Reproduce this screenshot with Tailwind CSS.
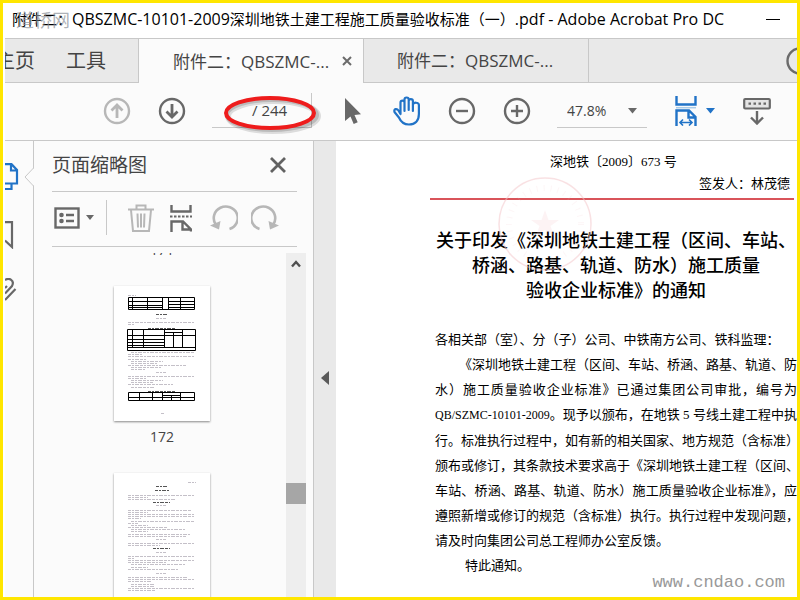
<!DOCTYPE html>
<html lang="zh-CN">
<head>
  <meta charset="UTF-8">
  <meta name="viewport" content="width=device-width, initial-scale=1.0">
  <title>Adobe Acrobat Pro DC</title>
  <script src="https://cdn.jsdelivr.net/npm/@tailwindcss/browser@4"></script>
</head>
<body class="font-['Open_Sans','Noto_Sans_CJK_SC',sans-serif] text-[#444]">
  <div class="h-screen border-[3px] border-[#ffe600] bg-white pl-[2px] flex flex-col overflow-hidden">

    <!-- Title bar -->
    <header class="relative h-[36px] shrink-0 border-b border-[#c8c8c8] flex items-center justify-between pl-[7px] pr-[17px] pb-[3px] text-black">
      <h1 class="text-[16px] leading-[20px] whitespace-nowrap"><span class="text-[15px]">附件二<span class="font-['Noto_Sans_CJK_TC',sans-serif]">：</span></span>QBSZMC-10101-2009<span class="text-[15px]">深圳地铁土建工程施工质量验收标准（一）</span>.pdf - Adobe Acrobat Pro DC</h1>
      <button aria-label="最小化" class="w-[14px] h-4 flex items-center"><span class="block w-full h-px bg-black"></span></button>
      <span class="absolute left-[11px] top-[4px] text-[18px] leading-[26px] text-[#8a8f98]/70">道桥网</span>
    </header>

    <!-- Tabs -->
    <nav class="h-[44px] shrink-0 flex bg-[#e9e9e9] text-[17px] overflow-hidden">
      <div class="w-[134px] shrink-0 flex items-center border-b border-r border-[#c8c8c8] text-[20px] overflow-hidden">
        <a href="#" class="shrink-0 -ml-[10px]">主页</a>
        <a href="#" class="shrink-0 ml-[31px]">工具</a>
      </div>
      <div class="w-[224px] shrink-0 flex items-center bg-[#fbfbfb] pl-[34px] pr-[11px] justify-between">
        <a href="#" class="whitespace-nowrap">附件二<span class="font-['Noto_Sans_CJK_TC',sans-serif]">：</span>QBSZMC-...</a>
        <button aria-label="关闭标签">
          <svg class="w-[10px] h-[10px] block" viewBox="0 0 10 10" stroke="#6b6b6b" stroke-width="2"><path d="M1 1l8 8M9 1l-8 8"/></svg>
        </button>
      </div>
      <div class="w-[226px] shrink-0 flex items-center border-x border-b border-[#c8c8c8] pl-[33px]">
        <a href="#" class="whitespace-nowrap">附件二<span class="font-['Noto_Sans_CJK_TC',sans-serif]">：</span>QBSZMC-...</a>
      </div>
      <div class="flex-1 flex items-center justify-end border-b border-[#c8c8c8] overflow-hidden">
        <button aria-label="帮助" class="shrink-0 -mr-[17px]">
          <svg class="w-[28px] h-[28px] block" viewBox="0 0 28 28" fill="none" stroke="#6b6b6b" stroke-width="2.4"><circle cx="14" cy="14" r="12.5"/></svg>
        </button>
      </div>
    </nav>

    <!-- Toolbar -->
    <div class="h-[58px] shrink-0 flex items-center bg-[#fbfbfb] border-b border-[#c8c8c8] pl-[98px] pb-[2px] overflow-hidden">
      <button aria-label="上一页" class="shrink-0">
        <svg class="w-[28px] h-[28px] block" viewBox="0 0 28 28" fill="none" stroke="#b7b7b7" stroke-width="2.4"><circle cx="14" cy="14" r="12"/><path stroke-width="2.8" d="M14 21V8M8.500 13.500L14 8l5.500 5.500"/></svg>
      </button>
      <button aria-label="下一页" class="shrink-0 ml-[27px]">
        <svg class="w-[28px] h-[28px] block" viewBox="0 0 28 28" fill="none" stroke="#686868" stroke-width="2.400"><circle cx="14" cy="14" r="12"/><path stroke-width="2.8" d="M14 7v13M8.500 14.500L14 20l5.500-5.500"/></svg>
      </button>
      <label class="relative shrink-0 ml-[26px] w-[100px] h-[35px] border-b border-r border-[#c8c8c8] flex items-center text-[15px]">
        <input type="text" aria-label="页码" class="w-[40px] h-[24px] bg-transparent outline-none text-right">
        <span>/ 244</span>
        <svg class="absolute left-[10px] top-0 w-[100px] h-[44px]" viewBox="0 0 100 44" fill="none">
          <ellipse cx="51" cy="23" rx="45" ry="15" stroke="#000" stroke-opacity=".12" stroke-width="6"/>
          <ellipse cx="50" cy="22" rx="45" ry="15" stroke="#000" stroke-opacity=".15" stroke-width="4"/>
          <ellipse cx="48" cy="20" rx="44" ry="15" stroke="#ee1c1c" stroke-width="4"/>
        </svg>
      </label>
      <button aria-label="选择工具" class="shrink-0 ml-[27px]">
        <svg class="w-[28px] h-[28px] block" viewBox="0 0 28 28" fill="#686868"><path d="M6 1v23l5.500-4.500 3.200 7.500 4-1.800-3.200-7.200 6.500-.8z"/></svg>
      </button>
      <button aria-label="手形工具" class="shrink-0 ml-[26px]">
        <svg class="w-[28px] h-[30px] block" viewBox="0 0 28 30" fill="none" stroke="#2173c7" stroke-width="2.2" stroke-linecap="round" stroke-linejoin="round"><path d="M7.500 18V6.500c0-2.600 4-2.600 4 0V15M11.500 8V3.500c0-2.700 4.200-2.700 4.200 0V14M15.700 5c0-2.600 4.200-2.600 4.200 0v10M19.900 8.500c0-2.300 6-2.600 6 .500V18c0 7-4 10.500-10 10.500-5 0-8-2.500-10-7L1.500 16c-1-3.500 2.500-3.700 4-1.500L7.500 18"/></svg>
      </button>
      <button aria-label="缩小" class="shrink-0 ml-[27px]">
        <svg class="w-[28px] h-[28px] block" viewBox="0 0 28 28" fill="none" stroke="#686868" stroke-width="2.400"><circle cx="14" cy="14" r="12"/><path d="M8 14h12"/></svg>
      </button>
      <button aria-label="放大" class="shrink-0 ml-[27px]">
        <svg class="w-[28px] h-[28px] block" viewBox="0 0 28 28" fill="none" stroke="#686868" stroke-width="2.400"><circle cx="14" cy="14" r="12"/><path d="M8 14h12M14 8v12"/></svg>
      </button>
      <div class="relative shrink-0 ml-[26px] w-[90px] h-[35px] border-b border-[#c8c8c8]">
        <select aria-label="缩放比例" class="appearance-none bg-transparent w-full h-full pl-[10px] text-[14px] outline-none">
          <option>47.8%</option>
        </select>
        <svg class="absolute right-[10px] top-[15px] w-[9px] h-[6px] pointer-events-none" viewBox="0 0 9 6" fill="#686868"><path d="M0 0h9L4.500 5.500z"/></svg>
      </div>
      <button aria-label="适合宽度" class="shrink-0 ml-[28px] flex items-center gap-[9px]">
        <svg class="w-[22px] h-[30px] block" viewBox="0 0 22 30" fill="none" stroke="#2173c7" stroke-width="2.400"><path d="M1.500 0v8.500h19V0M1.500 30V14.500H14l6.500 6.500v9M13.500 14.500v7h7"/><path stroke="#a9cbe8" stroke-width="1.500" d="M1 11.700h20"/><path stroke-width="1.600" d="M5 26.500h12M8 23.500l-3 3 3 3M14 23.500l3 3-3 3"/></svg>
        <svg class="w-[9px] h-[6px]" viewBox="0 0 9 6" fill="#2173c7"><path d="M0 0h9L4.500 5.500z"/></svg>
      </button>
      <button aria-label="显示工具栏" class="shrink-0 ml-[28px]">
        <svg class="w-[28px] h-[28px] block" viewBox="0 0 28 28" fill="none" stroke="#686868" stroke-width="2.200"><rect x="1.200" y="2" width="25.600" height="9.500" rx="1" fill="#e4e4e4"/><path stroke-dasharray="2.500 2.500" d="M5.500 6.700h18"/><path stroke-width="2.400" d="M14 14v12M8 20.500l6 6 6-6"/></svg>
      </button>
    </div>

    <div class="flex-1 min-h-0 flex">
      <!-- Side rail -->
      <aside class="relative w-[29px] shrink-0 bg-[#fbfbfb] border-r border-[#c8c8c8] flex flex-col items-start pt-[22px]">
        <button aria-label="页面缩略图">
          <svg class="w-[14px] h-[28px] block" viewBox="0 0 14 28" fill="none" stroke="#2173c7" stroke-width="2.200"><path d="M0 1.200h6.500L12 7v13.500H0M6 1.500V7.500h6M6.500 21v5H0"/></svg>
        </button>
        <button aria-label="书签" class="mt-[30px]">
          <svg class="w-[14px] h-[28px] block" viewBox="0 0 14 28" fill="none" stroke="#686868" stroke-width="2.200"><path d="M0 1.200h7V26L0 19.500"/></svg>
        </button>
        <button aria-label="附件" class="mt-[29px]">
          <svg class="w-[14px] h-[24px] block" viewBox="0 0 14 24" fill="none" stroke="#686868" stroke-width="2.2"><path d="M0 2C4-.500 10 2 7 8L0 15.500M10.500 11L0 22M0 10l2-2"/></svg>
        </button>
        <svg class="absolute -right-px top-[27px] w-[10px] h-[18px]" viewBox="0 0 10 18" fill="#fbfbfb"><path d="M10 0L1 9l9 9"/><path fill="none" stroke="#c8c8c8" d="M9.500 0L1 9l8.500 9"/></svg>
      </aside>

      <!-- Thumbnail panel -->
      <section class="w-[280px] shrink-0 bg-[#fbfbfb] border-r border-[#c8c8c8] flex flex-col">
        <div class="ml-[18px] mr-[16px] h-[51px] shrink-0 border-b border-[#c8c8c8] flex items-center justify-between pr-[11px] pb-[3px]">
          <h2 class="text-[19px] leading-[28px]">页面缩略图</h2>
          <button aria-label="关闭面板">
            <svg class="w-[16px] h-[16px] block" viewBox="0 0 16 16" stroke="#626262" stroke-width="2.800"><path d="M1 1l14 14M15 1L1 15"/></svg>
          </button>
        </div>
        <div class="ml-[18px] mr-[16px] h-[55px] shrink-0 border-b border-[#c8c8c8] flex items-center pl-[2px] pb-[3px]">
          <button aria-label="选项" class="flex items-center gap-[6px]">
            <svg class="w-[26px] h-[22px]" viewBox="0 0 26 22" fill="none" stroke="#686868" stroke-width="2.400"><rect x="1.500" y="1.500" width="23" height="19"/><path d="M12 8h8M12 14h8"/><g fill="#686868" stroke="none"><circle cx="7.500" cy="8" r="2.300"/><circle cx="7.500" cy="14" r="2.300"/></g></svg>
            <svg class="w-[8px] h-[5px]" viewBox="0 0 8 5" fill="#686868"><path d="M0 0h8L4 5z"/></svg>
          </button>
          <span class="w-px h-[35px] bg-[#c8c8c8] ml-[12px]"></span>
          <button aria-label="删除页面" class="ml-[21px]">
            <svg class="w-[26px] h-[28px] block" viewBox="0 0 26 28" fill="none" stroke="#b7b7b7" stroke-width="2"><path d="M0 5.500h26M8.500 5V1.500h9V5M3 6l2 21h16l2-21M9.500 9.500l.500 14M13 9.500v14M16.500 9.500l-.500 14"/></svg>
          </button>
          <button aria-label="拆分页面" class="ml-[16px]">
            <svg class="w-[22px] h-[28px] block" viewBox="0 0 22 28" fill="none" stroke="#686868" stroke-width="2.400"><path d="M1.500 1v6.500h19V1M1.500 28V17.500H13l8 8v2M12.500 17v8.500h8.500"/><path stroke-dasharray="2.500 1.500" stroke-width="2" d="M0 12.500h22"/></svg>
          </button>
          <button aria-label="逆时针旋转" class="ml-[18px]">
            <svg class="w-[28px] h-[26px] block" viewBox="0 0 28 26" fill="none" stroke="#b7b7b7" stroke-width="2.600"><path d="M19.500 24A12 11.500 0 1 0 5.500 19"/><path fill="#b7b7b7" stroke="none" d="M0 20.500L10.500 16 9 24.500z"/></svg>
          </button>
          <button aria-label="顺时针旋转" class="ml-[13px]">
            <svg class="w-[28px] h-[26px] block" viewBox="0 0 28 26" fill="none" stroke="#b7b7b7" stroke-width="2.600"><path d="M8.500 24A12 11.500 0 1 1 22.500 19"/><path fill="#b7b7b7" stroke="none" d="M28 20.500L17.500 16 19 24.500z"/></svg>
          </button>
        </div>

        <div class="mt-[6px] ml-[4px] mr-[7px] flex-1 min-h-0 flex">
          <div class="flex-1 overflow-hidden">
            <div class="-mt-[13px] flex flex-col items-center gap-[26px] text-[14px] leading-[20px]">
              <span>171</span>
              <figure class="flex flex-col items-center gap-[6px]">
                <svg id="page172" class="w-[96px] h-[135px] bg-white shadow-[0_1px_2px_#888]" viewBox="0 0 96 135"></svg>
                <figcaption>172</figcaption>
              </figure>
              <figure>
                <svg id="page173" class="w-[96px] h-[135px] bg-white shadow-[0_1px_2px_#888]" viewBox="0 0 96 135"></svg>
              </figure>
            </div>
          </div>
          <div class="w-[20px] shrink-0 bg-[#eee] flex flex-col items-center pt-[7px]">
            <svg class="w-[10px] h-[8px] shrink-0" viewBox="0 0 10 8" fill="none" stroke="#505050" stroke-width="2.400"><path d="M1 6.500l4-4.500 4 4.500"/></svg>
            <div class="mt-[215px] w-full h-[21px] shrink-0 bg-[#a6a6a6]"></div>
          </div>
        </div>
      </section>

      <!-- Collapse strip -->
      <div class="w-[22px] shrink-0 bg-[#e9e9e9] flex items-center justify-center pt-[18px]">
        <button aria-label="折叠">
          <svg class="w-[8px] h-[14px] block" viewBox="0 0 8 14" fill="#5a5a5a"><path d="M8 0v14L0 7z"/></svg>
        </button>
      </div>

      <!-- Document -->
      <main class="relative flex-1 min-w-0 overflow-hidden pl-[94px] text-black whitespace-nowrap font-['Liberation_Serif','Noto_Sans_CJK_SC',serif]">
        <svg class="absolute left-[161px] top-[35px] w-[96px] h-[96px]" viewBox="0 0 96 96" fill="none" stroke="#f3c4c8"><circle cx="48" cy="48" r="46" stroke-width="1.500" stroke-opacity=".5"/><circle cx="48" cy="48" r="36" stroke-width="6" stroke-dasharray="1 6" stroke-opacity=".15"/><path fill="#f3c4c8" fill-opacity=".2" stroke="none" d="M48 34l3.500 10H62l-8.500 6 3.500 10-9-6-9 6 3.500-10-8.500-6h10.500z"/></svg>
        <p class="pt-[10px] text-[13px] leading-[22px] text-center">深地铁〔2009〕673 号</p>
        <div class="mr-[3px] pr-[4px] pb-[3px] text-[13px] leading-[22px] text-right border-b-2 border-[#d9545a]">签发人：林茂德</div>
        <h2 class="pl-[5px] mt-[29px] text-[18px] leading-[25px] text-center font-medium">
          <span class="block">关于印发《深圳地铁土建工程（区间、车站、</span>
          <span class="block">桥涵、路基、轨道、防水）施工质量</span>
          <span class="block">验收企业标准》的通知</span>
        </h2>
        <div class="ml-[5px] mt-[23px] text-[13px] leading-[25px]">
          <p>各相关部（室）、分（子）公司、中铁南方公司、铁科监理：</p>
          <p class="pl-[24px] [text-align-last:justify]">《深圳地铁土建工程（区间、车站、桥涵、路基、轨道、防</p>
          <p class="[text-align-last:justify]">水）施工质量验收企业标准》已通过集团公司审批，编号为</p>
          <p class="[text-align-last:justify]"><span class="text-[12px]">QB/SZMC-10101-2009</span>。现予以颁布，在地铁 5 号线土建工程中执</p>
          <p class="[text-align-last:justify]">行。标准执行过程中，如有新的相关国家、地方规范（含标准）</p>
          <p class="[text-align-last:justify]">颁布或修订，其条款技术要求高于《深圳地铁土建工程（区间、</p>
          <p class="[text-align-last:justify]">车站、桥涵、路基、轨道、防水）施工质量验收企业标准》，应</p>
          <p class="[text-align-last:justify]">遵照新增或修订的规范（含标准）执行。执行过程中发现问题，</p>
          <p>请及时向集团公司总工程师办公室反馈。</p>
          <p class="pl-[30px]">特此通知。</p>
        </div>
        <span class="absolute right-[12px] bottom-[2px] text-[17px] leading-[24px] text-[#999] font-['Liberation_Mono',monospace]">www.cndao.com</span>
      </main>
    </div>
  </div>

  <script>
    // Text rows of each thumbnail: [x, y, width, bold]
    const rows172 = [
      [14, 9, 8], [42, 28, 12, 1], [42, 32, 10], [14, 36, 67], [14, 38, 6], [34, 42, 28, 1],
      [17, 66, 63], [14, 68, 14], [14, 70, 67], [14, 73, 18], [17, 75, 32], [17, 77, 26], [14, 79, 58],
      [17, 81, 30], [17, 83, 14], [42, 86, 10], [14, 90, 67], [14, 92, 18], [17, 94, 32], [17, 96, 22],
      [14, 98, 45], [17, 101, 24], [34, 105, 28, 1], [47, 127, 3]
    ];
    const rows173 = [
      [74, 9, 8], [42, 13, 12, 1], [41, 17, 14, 1], [14, 22, 67], [14, 24, 20], [14, 26, 48],
      [39, 29, 17, 1], [42, 32, 10], [14, 37, 64], [14, 39, 20], [14, 41, 67], [14, 43, 67], [14, 45, 13],
      [17, 48, 64], [14, 50, 10], [17, 52, 17], [14, 54, 40], [17, 56, 54], [17, 58, 17], [14, 61, 62],
      [14, 63, 58], [42, 66, 10], [14, 70, 67], [14, 72, 32], [39, 75, 17, 1], [42, 79, 10], [14, 83, 67],
      [14, 85, 6], [14, 87, 66], [14, 89, 38], [17, 91, 54], [17, 94, 17], [14, 96, 50], [42, 100, 10],
      [14, 104, 60], [14, 106, 67], [14, 108, 24], [17, 111, 23], [17, 113, 23], [14, 115, 67], [14, 117, 28]
    ];
    // Ruled tables of page 172
    const tables172 = `
      <path fill="none" stroke="#000" d="M14.500 11.500h66v12h-66zM14.500 15.500h34M14.500 19.500h34M14.500 21.500h34M54.500 15.500h26M54.500 18.500h26M54.500 21.500h26M18.500 11.500v12M33.500 11.500v12M48.500 11.500v12M54.500 11.500v12M66.500 11.500v12"/>
      <path fill="none" stroke="#000" d="M13.500 43.500h68v21h-68zM13.500 49.500h37M13.500 53.500h37M13.500 56.500h37M13.500 59.500h37M13.500 61.500h68M50.500 46.500h18M50.500 49.500h31M18.500 43.500v18M29.500 43.500v18M50.500 43.500v18M59.500 46.500v15M68.500 43.500v18"/>
      <path fill="none" stroke="#000" d="M14.500 106.500h66v8h-66zM14.500 111.500h66M48.500 109.500h18M25.500 106.500v8M38.500 106.500v8M48.500 106.500v8M57.500 109.500v5M66.500 106.500v8"/>`;

    function drawPage(id, rows, extra) {
      const lines = rows.map(([x, y, w, bold]) =>
        `<path d="M${x} ${y + 0.5}h${w}" stroke="${bold ? '#555' : '#c4c0c8'}" stroke-dasharray="3 1 2 1 4 1"/>`);
      document.getElementById(id).innerHTML = lines.join("") + extra;
    }

    drawPage("page172", rows172, tables172);
    drawPage("page173", rows173, "");
  </script>
</body>
</html>
